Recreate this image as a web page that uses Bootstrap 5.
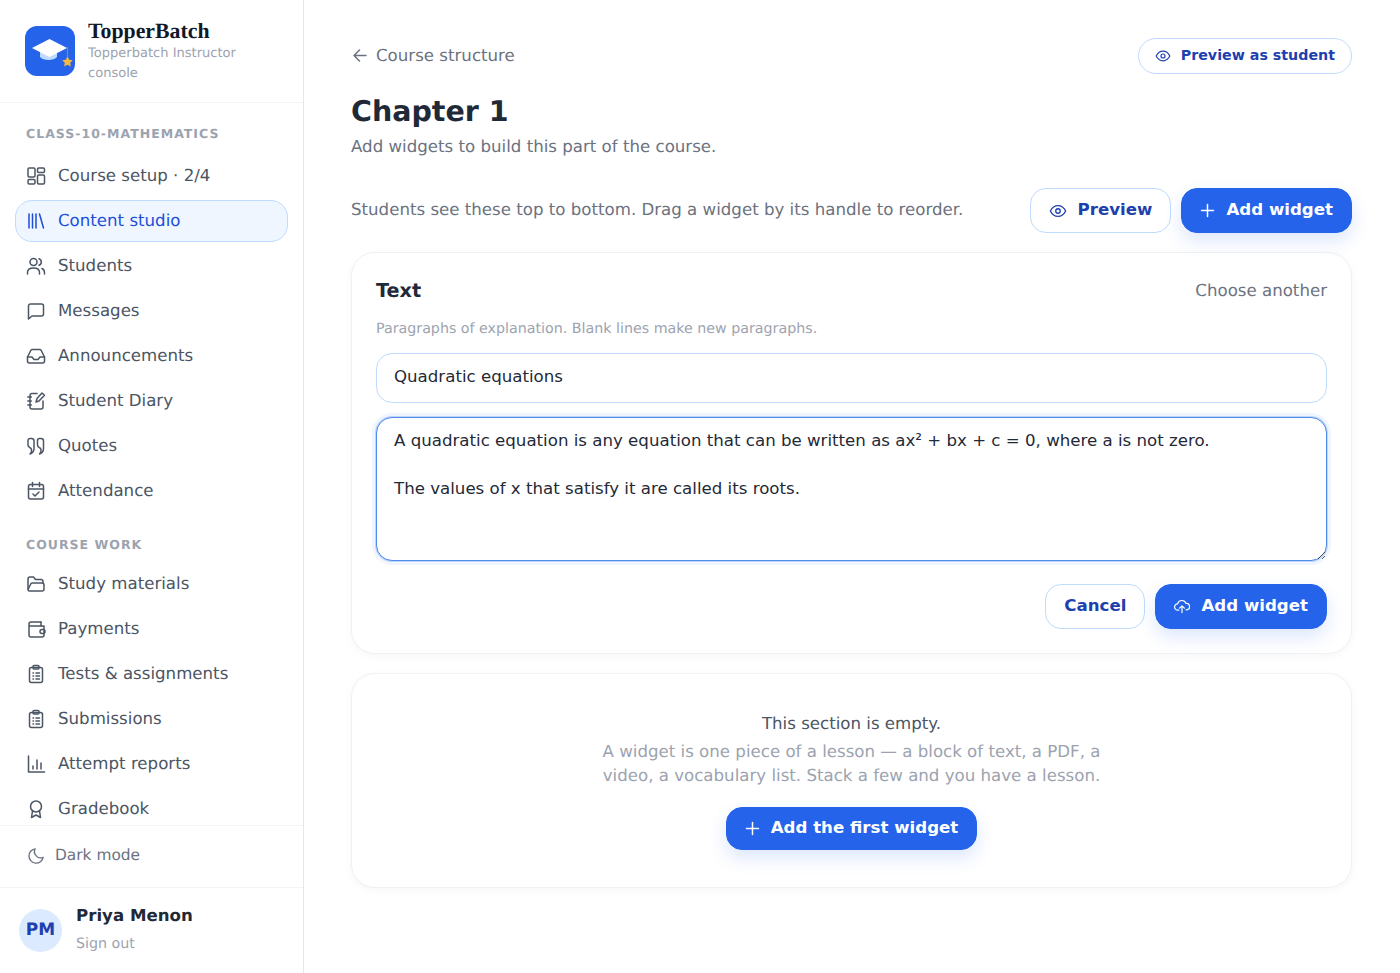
<!DOCTYPE html>
<html lang="en">
<head>
    <meta charset="UTF-8">
    <meta name="viewport" content="width=device-width, initial-scale=1.0">
    <title>Chapter 1 - TopperBatch</title>

    <!-- Bootstrap CSS -->
    <link href="https://cdn.jsdelivr.net/npm/bootstrap@5.3.0/dist/css/bootstrap.min.css" rel="stylesheet">

    <style>
        body {
            font-family: "DejaVu Sans", sans-serif;
            text-rendering: geometricPrecision;
            background-color: #fff;
            color: #1f2937;
            height: 973px;
            overflow: hidden;
        }
        svg.ico {
            fill: none;
            stroke: currentColor;
            stroke-width: 1.5;
            stroke-linecap: round;
            stroke-linejoin: round;
            flex-shrink: 0;
        }
        .side-bar {
            width: 304px;
            height: 973px;
            border-right: 1px solid #e5e7eb;
        }
        .brand-box {
            height: 103px;
            padding: 26px 25px 0;
            gap: 13px;
            border-bottom: 1px solid #f3f4f6;
        }
        .brand-name {
            font-family: "Liberation Serif", serif;
            font-weight: 700;
            font-size: 21.8px;
            line-height: 24px;
            margin-top: -7px;
            color: #111827;
        }
        .brand-sub {
            font-size: 13.05px;
            line-height: 20px;
            margin-top: 1px;
            color: #9ca3af;
        }
        .side-scroll {
            flex: 1;
            overflow: hidden;
            padding: 0 15px 0 14.5px;
        }
        .side-head {
            font-size: 12.5px;
            font-weight: 700;
            letter-spacing: 1px;
            color: #9ca3af;
            padding-left: 11.5px;
            line-height: 20px;
            margin-top: 21px;
            margin-bottom: 11px;
        }
        .side-head.second {
            margin-top: 23px;
            margin-bottom: 8px;
        }
        .side-link {
            display: flex;
            align-items: center;
            gap: 12px;
            height: 42px;
            margin-bottom: 3px;
            padding: 0 10.5px;
            font-size: 16.64px;
            color: #4b5563;
            text-decoration: none;
            border: 1px solid transparent;
            border-radius: 17px;
        }
        .side-link.on {
            color: #1d4ed8;
            background-color: #eff6ff;
            border-color: #bfdbfe;
        }
        .dark-row {
            height: 62px;
            padding: 0 0 2px 27px;
            gap: 10px;
            font-size: 15.4px;
            color: #6b7280;
            border-top: 1px solid #f3f4f6;
        }
        .user-row {
            height: 86px;
            padding-left: 19px;
            gap: 14px;
            border-top: 1px solid #f3f4f6;
        }
        .avatar-dot {
            width: 43px;
            height: 43px;
            border-radius: 50%;
            background-color: #dbeafe;
            color: #1e40af;
            font-weight: 700;
            font-size: 17px;
        }
        .user-name {
            font-size: 16.64px;
            font-weight: 700;
            line-height: 28px;
            margin-top: -2px;
            color: #1f2937;
        }
        .user-out {
            font-size: 14.24px;
            line-height: 28px;
            color: #9ca3af;
        }
        .main-pane {
            padding: 38px 48px 0 47px;
        }
        .back-link {
            gap: 8px;
            font-size: 16.64px;
            color: #6b7280;
            text-decoration: none;
        }
        .pill-btn {
            height: 36px;
            padding: 0 16px;
            gap: 10px;
            font-size: 14.24px;
            font-weight: 700;
            color: #1e40af;
            background-color: #fff;
            border: 1px solid #bfdbfe;
            border-radius: 18px;
        }
        .page-title {
            font-size: 28.5px;
            font-weight: 700;
            line-height: 36px;
            margin: 20px 0 0;
            color: #1f2937;
        }
        .page-sub {
            font-size: 16.64px;
            line-height: 26px;
            margin: 4px 0 0;
            color: #6b7280;
        }
        .tool-row {
            margin-top: 28px;
            margin-bottom: 19px;
        }
        .tool-gap {
            gap: 10px;
        }
        .tool-text {
            font-size: 16.64px;
            color: #6b7280;
        }
        .soft-btn, .solid-btn {
            height: 45px;
            gap: 11px;
            font-size: 16.64px;
            font-weight: 700;
            border-radius: 16px;
            padding: 0 18px;
        }
        .soft-btn {
            color: #1e40af;
            background-color: #fff;
            border: 1px solid #bfdbfe;
        }
        .solid-btn {
            color: #fff;
            background-color: #2563eb;
            border: 1px solid #2563eb;
            box-shadow: 0 8px 18px rgba(37, 99, 235, 0.16);
        }
        .panel-box {
            border: 1px solid #f0f1f3;
            border-radius: 24px;
            background-color: #fff;
            box-shadow: 0 2px 8px rgba(17, 24, 39, 0.04);
        }
        .panel-form {
            height: 402px;
            padding: 24px 24px 23px;
            margin-bottom: 19px;
        }
        .panel-title {
            font-size: 19.2px;
            font-weight: 700;
            line-height: 28px;
            color: #1f2937;
        }
        .panel-other {
            font-size: 16.64px;
            color: #6b7280;
        }
        .panel-hint {
            font-size: 14.24px;
            line-height: 20px;
            margin: 14px 0 14px;
            color: #9ca3af;
        }
        .field-input, .field-area {
            font-size: 16.64px;
            color: #1f2937;
            border-radius: 16px;
        }
        .field-input {
            height: 49.5px;
            padding: 9px 17px 11px;
            border: 1px solid #bfdbfe;
            margin-bottom: 14.5px;
        }
        .field-area {
            height: 144px;
            padding: 11px 17px 10px;
            line-height: 24px;
            border: 1px solid #4f8cec;
            box-shadow: 0 0 0 1px rgba(79, 140, 236, 0.3), 0 0 0 4px #eff6ff;
            margin-bottom: 23px;
        }
        .panel-empty {
            height: 215px;
            padding-top: 37px;
            text-align: center;
        }
        .empty-head {
            font-size: 16.64px;
            line-height: 26px;
            color: #4b5563;
        }
        .empty-text {
            font-size: 16.64px;
            line-height: 24px;
            color: #9ca3af;
            margin: 3px auto 19px;
            width: 530px;
        }
        .panel-empty .solid-btn {
            height: 43px;
        }
    </style>
</head>
<body>
    <div class="d-flex">
        <!-- Sidebar -->
        <aside class="side-bar d-flex flex-column flex-shrink-0">
            <div class="brand-box d-flex">
                <svg width="50" height="50" viewBox="0 0 50 50" class="flex-shrink-0">
                    <rect width="50" height="50" rx="12" fill="#2563eb"/>
                    <path d="M15 24v7c3 4 14 4 17 0v-7z" fill="#bfdbfe"/>
                    <path d="M24.500 13l-17.500 9 17.500 9 17.500-9z" fill="#fff"/>
                    <path d="M42.500 21v12" stroke="#8c8a70" stroke-width="1.2"/>
                    <path d="M42.500 30.500l1.700 3.300 3.600.5-2.600 2.500.6 3.600-3.300-1.700-3.300 1.700.6-3.600-2.600-2.500 3.600-.5z" fill="#f5b942"/>
                </svg>
                <div>
                    <div class="brand-name">TopperBatch</div>
                    <div class="brand-sub">Topperbatch Instructor console</div>
                </div>
            </div>

            <div class="side-scroll">
                <div class="side-head">CLASS-10-MATHEMATICS</div>
                <a class="side-link" href="#"><svg class="ico" width="20" height="20" viewBox="0 0 20 20"><rect x="2" y="2" width="7" height="9" rx="1.200"/><rect x="11.500" y="2" width="7" height="4.500" rx="1.200"/><rect x="2" y="13.500" width="7" height="4.500" rx="1.200"/><rect x="11.500" y="9" width="7" height="9" rx="1.200"/></svg>Course setup · 2/4</a>
                <a class="side-link on" href="#"><svg class="ico" width="20" height="20" viewBox="0 0 20 20"><path d="M3 3v14M6.500 3v14M10 3v14M13.500 3l4 14"/></svg>Content studio</a>
                <a class="side-link" href="#"><svg class="ico" width="20" height="20" viewBox="0 0 20 20"><circle cx="7.500" cy="6" r="3.500"/><path d="M1.500 18v-1.500c0-3 2.500-4.500 6-4.500s6 1.500 6 4.500V18M13 2.700a3.500 3.500 0 0 1 0 6.600M16 12.500c1.500.7 2.500 2 2.500 4V18"/></svg>Students</a>
                <a class="side-link" href="#"><svg class="ico" width="20" height="20" viewBox="0 0 20 20"><path d="M2.500 18V5a2 2 0 0 1 2-2h11a2 2 0 0 1 2 2v8a2 2 0 0 1-2 2H6z"/></svg>Messages</a>
                <a class="side-link" href="#"><svg class="ico" width="20" height="20" viewBox="0 0 20 20"><path d="M1.500 11V15a2 2 0 0 0 2 2h13a2 2 0 0 0 2-2v-4L15.500 5a2 2 0 0 0-2-1.500h-7A2 2 0 0 0 4.500 5z"/><path d="M1.500 11h4.500l2 2.500h4l2-2.500h4.500"/></svg>Announcements</a>
                <a class="side-link" href="#"><svg class="ico" width="20" height="20" viewBox="0 0 20 20"><path d="M11 2.500H6a2 2 0 0 0-2 2V16a2 2 0 0 0 2 2h9a2 2 0 0 0 2-2v-6"/><path d="M1.800 6h3.500M1.800 10h3.500M1.800 14h3.500M10 11l1-3.500 5-5.500 2.500 2.200-5.500 5.800z"/></svg>Student Diary</a>
                <a class="side-link" href="#"><svg class="ico" width="20" height="20" viewBox="0 0 20 20"><path d="M4 2.500h1.500A2.500 2.500 0 0 1 8 5v7.500c0 3-1.500 4.500-4 5.500 1-1 2-2.500 1.500-4.500-.3-1-.8-1.500-1.500-1.800-1-.5-2-1.300-2-2.700V4.500A2 2 0 0 1 4 2.500z"/><path d="M13.500 2.500H15A2.500 2.500 0 0 1 17.500 5v7.500c0 3-1.500 4.500-4 5.500 1-1 2-2.500 1.500-4.500-.3-1-.8-1.500-1.500-1.800-1-.5-2-1.300-2-2.700V4.500a2 2 0 0 1 2-2z"/></svg>Quotes</a>
                <a class="side-link" href="#"><svg class="ico" width="20" height="20" viewBox="0 0 20 20"><rect x="2.500" y="3.500" width="15" height="14.500" rx="2"/><path d="M2.500 8h15M6.500 1.500v4M13.500 1.500v4M7 13l2 2 4-4"/></svg>Attendance</a>

                <div class="side-head second">COURSE WORK</div>
                <a class="side-link" href="#"><svg class="ico" width="20" height="20" viewBox="0 0 20 20"><path d="M2 15V5a2 2 0 0 1 2-2h3.500l2 2.500H15a2 2 0 0 1 2 2V9"/><path d="M2 15.500A1.500 1.500 0 0 0 3.500 17H16a2 2 0 0 0 2-2v-4a2 2 0 0 0-2-2H6.500a2 2 0 0 0-2 1.500z"/></svg>Study materials</a>
                <a class="side-link" href="#"><svg class="ico" width="20" height="20" viewBox="0 0 20 20"><path d="M15 3H5a2 2 0 0 0-2 2v11a2 2 0 0 0 2 2h11a2 2 0 0 0 2-2V7H3.500"/><path d="M15 3v4"/><rect x="14" y="10.500" width="5" height="4" rx="2"/></svg>Payments</a>
                <a class="side-link" href="#"><svg class="ico" width="20" height="20" viewBox="0 0 20 20"><rect x="3.500" y="3.500" width="13" height="15" rx="2"/><rect x="7" y="1.500" width="6" height="3.500" rx="1"/><path d="M7 9h.5M10 9h3.500M7 12h.5M10 12h3.500M7 15h.5M10 15h3.500"/></svg>Tests &amp; assignments</a>
                <a class="side-link" href="#"><svg class="ico" width="20" height="20" viewBox="0 0 20 20"><rect x="3.500" y="3.500" width="13" height="15" rx="2"/><rect x="7" y="1.500" width="6" height="3.500" rx="1"/><path d="M7 9h.5M10 9h3.500M7 12h.5M10 12h3.500M7 15h.5M10 15h3.500"/></svg>Submissions</a>
                <a class="side-link" href="#"><svg class="ico" width="20" height="20" viewBox="0 0 20 20"><path d="M2.500 2v16h16M7 15v-3M11 15V6M15 15V9"/></svg>Attempt reports</a>
                <a class="side-link" href="#"><svg class="ico" width="20" height="20" viewBox="0 0 20 20"><circle cx="10" cy="7.500" r="5.500"/><path d="M6.500 12l-1 6.500 4.500-2.500 4.500 2.500-1-6.500"/></svg>Gradebook</a>
            </div>

            <div class="dark-row d-flex align-items-center">
                <svg class="ico" width="18" height="18" viewBox="0 0 20 20"><path d="M9 2a8 8 0 1 0 9 9.500A7 7 0 0 1 9 2z"/></svg>Dark mode
            </div>

            <div class="user-row d-flex align-items-center">
                <div class="avatar-dot d-flex align-items-center justify-content-center">PM</div>
                <div>
                    <div class="user-name">Priya Menon</div>
                    <div class="user-out">Sign out</div>
                </div>
            </div>
        </aside>

        <!-- Main content -->
        <main class="main-pane flex-grow-1">
            <div class="d-flex justify-content-between align-items-center">
                <a class="back-link d-flex align-items-center" href="#"><svg class="ico" width="17" height="17" viewBox="0 0 17 17"><path d="M15 8.500H3M8.500 3L3 8.500 8.500 14"/></svg>Course structure</a>
                <button class="pill-btn d-flex align-items-center" type="button"><svg class="ico" width="16" height="16" viewBox="0 0 20 20"><path d="M1.500 10C3.500 6 6.500 4 10 4s6.500 2 8.500 6c-2 4-5 6-8.500 6s-6.500-2-8.500-6z"/><circle cx="10" cy="10" r="2.500"/></svg>Preview as student</button>
            </div>

            <h1 class="page-title">Chapter 1</h1>
            <p class="page-sub">Add widgets to build this part of the course.</p>

            <div class="tool-row d-flex justify-content-between align-items-center">
                <span class="tool-text">Students see these top to bottom. Drag a widget by its handle to reorder.</span>
                <div class="d-flex tool-gap">
                    <button class="soft-btn d-flex align-items-center" type="button"><svg class="ico" width="18" height="18" viewBox="0 0 20 20"><path d="M1.500 10C3.500 6 6.500 4 10 4s6.500 2 8.500 6c-2 4-5 6-8.500 6s-6.500-2-8.500-6z"/><circle cx="10" cy="10" r="2.500"/></svg>Preview</button>
                    <button class="solid-btn d-flex align-items-center" type="button"><svg class="ico" width="15" height="15" viewBox="0 0 15 15"><path d="M7.500 1.500v12M1.500 7.500h12"/></svg>Add widget</button>
                </div>
            </div>

            <div class="panel-box panel-form">
                <div class="d-flex justify-content-between align-items-center">
                    <span class="panel-title">Text</span>
                    <span class="panel-other">Choose another</span>
                </div>
                <p class="panel-hint">Paragraphs of explanation. Blank lines make new paragraphs.</p>
                <input class="form-control field-input" type="text" value="Quadratic equations">
                <textarea class="form-control field-area">A quadratic equation is any equation that can be written as ax² + bx + c = 0, where a is not zero.

The values of x that satisfy it are called its roots.</textarea>
                <div class="d-flex justify-content-end tool-gap">
                    <button class="soft-btn d-flex align-items-center" type="button">Cancel</button>
                    <button class="solid-btn d-flex align-items-center" type="button"><svg class="ico" width="16" height="16" viewBox="0 1 20 20"><path d="M6 15H5a4 4 0 0 1-.5-8A5.500 5.500 0 0 1 15 6.500a4 4 0 0 1 1 8h-1"/><path d="M10 18v-8M7 12.500l3-3 3 3"/></svg>Add widget</button>
                </div>
            </div>

            <div class="panel-box panel-empty">
                <div class="empty-head">This section is empty.</div>
                <p class="empty-text">A widget is one piece of a lesson — a block of text, a PDF, a video, a vocabulary list. Stack a few and you have a lesson.</p>
                <button class="solid-btn d-inline-flex align-items-center" type="button"><svg class="ico" width="15" height="15" viewBox="0 0 15 15"><path d="M7.500 1.500v12M1.500 7.500h12"/></svg>Add the first widget</button>
            </div>
        </main>
    </div>

    <!-- Bootstrap JS -->
    <script src="https://cdn.jsdelivr.net/npm/bootstrap@5.3.0/dist/js/bootstrap.bundle.min.js"></script>
</body>
</html>
